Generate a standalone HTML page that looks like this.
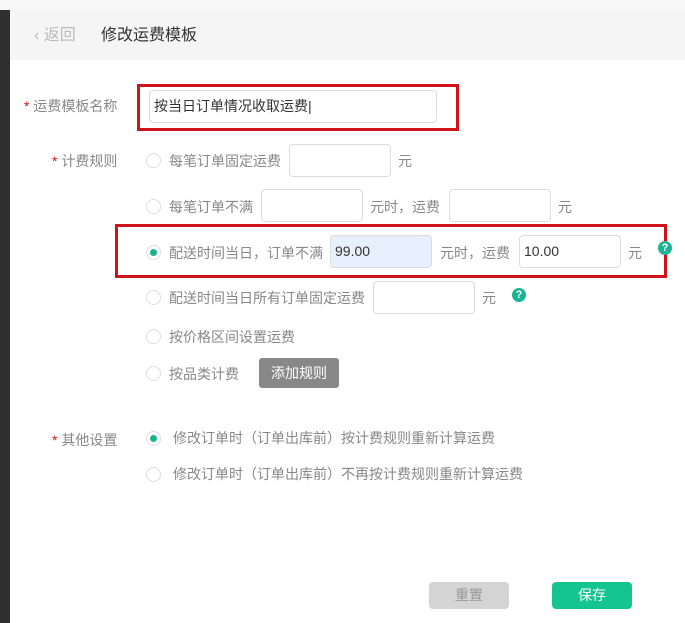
<!DOCTYPE html>
<html><head><meta charset="utf-8"><style>
*{margin:0;padding:0;box-sizing:border-box}
body{width:685px;height:623px;background:#fff;position:relative;overflow:hidden;font-family:"Liberation Sans","Noto Sans CJK SC",sans-serif;font-size:14px;color:#888}
.a{position:absolute;white-space:nowrap;line-height:16px}
.in{position:absolute;border:1px solid #dcdcdc;border-radius:4px;background:#fff;height:33px;width:102px;color:#333;font-size:14px;line-height:31px;padding-left:8px}
.r{position:absolute;width:15px;height:15px;border:1px solid #ddd;border-radius:50%;background:#fff}
.r.on::after{content:"";position:absolute;left:3px;top:3px;width:7px;height:7px;border-radius:50%;background:#1ab38c}
.q{position:absolute;width:14px;height:14px;border-radius:50%;background:#1ab394;color:#fff;font-size:11px;font-weight:bold;line-height:14px;text-align:center}
.st{color:#d0121b}
.red{position:absolute;border:3px solid #d0121b}
</style></head><body>
<div style="position:absolute;left:0;top:0;width:685px;height:10px;background:#f8f8f8"></div>
<div style="position:absolute;left:0;top:10px;width:10px;height:613px;background:#2f2f2f"></div>
<div style="position:absolute;left:10px;top:10px;width:675px;height:50px;background:#f5f5f5"></div>
<div class="a" style="left:34px;top:28px;font-size:16px;color:#bbb">‹ 返回</div>
<div class="a" style="left:101px;top:28px;font-size:16px;color:#333">修改运费模板</div>

<div class="red" style="left:137px;top:84px;width:322px;height:47px"></div>
<div class="a" style="left:24px;top:98px"><span class="st">* </span>运费模板名称</div>
<div class="in" style="left:149px;top:90px;width:288px;height:33px;color:#333;padding-left:4px">按当日订单情况收取运费|</div>

<div class="a" style="left:52px;top:153px"><span class="st">* </span>计费规则</div>
<div class="r" style="left:146px;top:153px"></div>
<div class="a" style="left:169px;top:153px">每笔订单固定运费</div>
<div class="in" style="left:289px;top:144px"></div>
<div class="a" style="left:398px;top:153px">元</div>

<div class="r" style="left:146px;top:199px"></div>
<div class="a" style="left:169px;top:199px">每笔订单不满</div>
<div class="in" style="left:261px;top:189px"></div>
<div class="a" style="left:370px;top:199px">元时，运费</div>
<div class="in" style="left:449px;top:189px"></div>
<div class="a" style="left:558px;top:199px">元</div>

<div class="red" style="left:115px;top:224px;width:552px;height:54px"></div>
<div class="r on" style="left:146px;top:245px"></div>
<div class="a" style="left:169px;top:245px">配送时间当日，订单不满</div>
<div class="in" style="left:330px;top:235px;background:#e8f0fe;padding-left:4px">99.00</div>
<div class="a" style="left:440px;top:245px">元时，运费</div>
<div class="in" style="left:519px;top:235px;padding-left:4px">10.00</div>
<div class="a" style="left:628px;top:245px">元</div>
<div class="q" style="left:658px;top:241px">?</div>

<div class="r" style="left:146px;top:290px"></div>
<div class="a" style="left:169px;top:290px">配送时间当日所有订单固定运费</div>
<div class="in" style="left:373px;top:281px"></div>
<div class="a" style="left:482px;top:290px">元</div>
<div class="q" style="left:512px;top:288px">?</div>

<div class="r" style="left:146px;top:329px"></div>
<div class="a" style="left:169px;top:329px">按价格区间设置运费</div>

<div class="r" style="left:146px;top:366px"></div>
<div class="a" style="left:169px;top:366px">按品类计费</div>
<div style="position:absolute;left:259px;top:358px;width:80px;height:30px;background:#888;border-radius:3px;color:#fff;text-align:center;line-height:30px">添加规则</div>

<div class="a" style="left:52px;top:432px"><span class="st">* </span>其他设置</div>
<div class="r on" style="left:146px;top:431px"></div>
<div class="a" style="left:173px;top:430px">修改订单时（订单出库前）按计费规则重新计算运费</div>
<div class="r" style="left:146px;top:467px"></div>
<div class="a" style="left:173px;top:466px">修改订单时（订单出库前）不再按计费规则重新计算运费</div>

<div style="position:absolute;left:429px;top:582px;width:80px;height:27px;background:#d4d4d4;border-radius:4px;color:#999;text-align:center;line-height:27px">重置</div>
<div style="position:absolute;left:552px;top:582px;width:80px;height:27px;background:#14c590;border-radius:4px;color:#fff;text-align:center;line-height:27px">保存</div>
</body></html>
